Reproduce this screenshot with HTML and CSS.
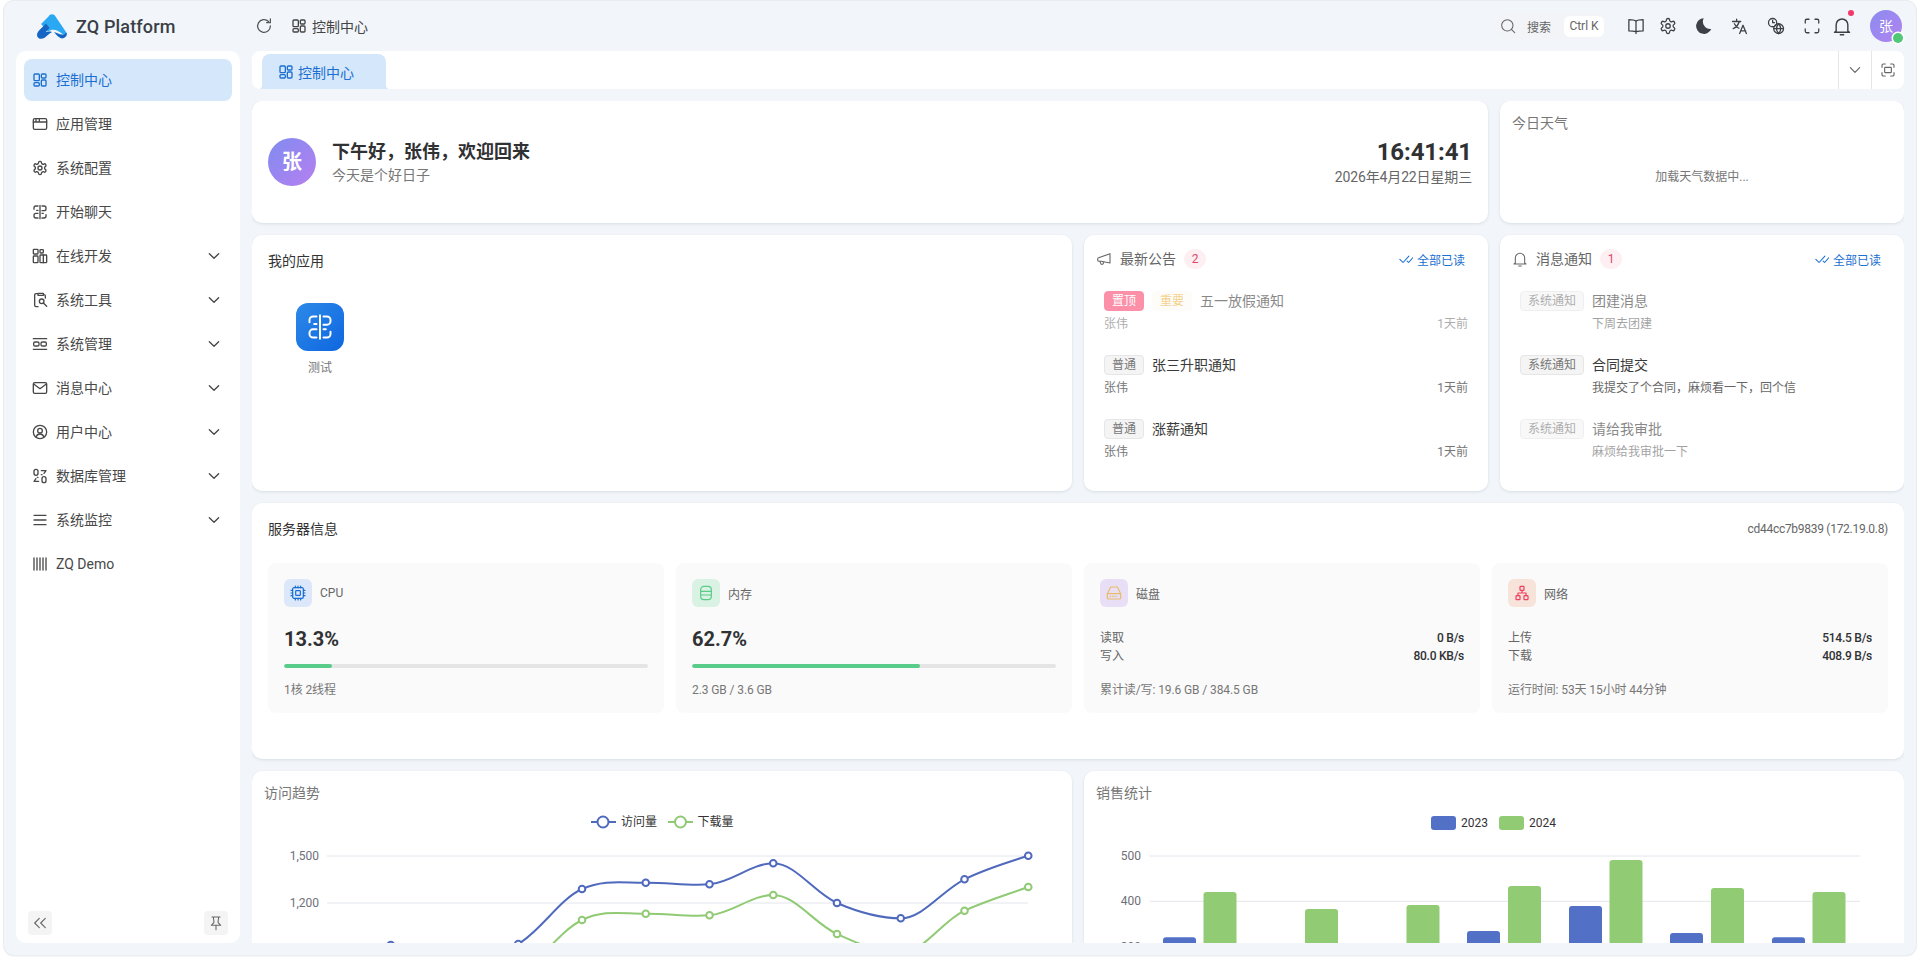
FILE: index.html
```html
<!DOCTYPE html>
<html lang="zh-CN">
<head>
<meta charset="utf-8">
<title>ZQ Platform</title>
<link rel="stylesheet" href="styles.css">
</head>
<body>
<svg class="defs" width="0" height="0" aria-hidden="true">
  <symbol id="i-grid" viewBox="0 0 24 24"><rect x="3" y="3" width="8" height="10" rx="1.500"/><rect x="14" y="3" width="7" height="6" rx="1.500"/><rect x="3" y="16" width="8" height="5" rx="1.500"/><rect x="14" y="12" width="7" height="9" rx="1.500"/></symbol>
  <symbol id="i-window" viewBox="0 0 24 24"><rect x="2" y="4" width="20" height="16" rx="2"/><path d="M2 9h20M6 4v5M11 4v5"/></symbol>
  <symbol id="i-gear" viewBox="0 0 24 24"><path d="M12.22 2h-.44a2 2 0 0 0-2 2v.18a2 2 0 0 1-1 1.73l-.43.25a2 2 0 0 1-2 0l-.15-.08a2 2 0 0 0-2.73.73l-.22.38a2 2 0 0 0 .73 2.73l.15.1a2 2 0 0 1 1 1.72v.51a2 2 0 0 1-1 1.74l-.15.09a2 2 0 0 0-.73 2.73l.22.38a2 2 0 0 0 2.73.73l.15-.08a2 2 0 0 1 2 0l.43.25a2 2 0 0 1 1 1.73V20a2 2 0 0 0 2 2h.44a2 2 0 0 0 2-2v-.18a2 2 0 0 1 1-1.73l.43-.25a2 2 0 0 1 2 0l.15.08a2 2 0 0 0 2.73-.73l.22-.39a2 2 0 0 0-.73-2.73l-.15-.08a2 2 0 0 1-1-1.74v-.5a2 2 0 0 1 1-1.74l.15-.09a2 2 0 0 0 .73-2.73l-.22-.38a2 2 0 0 0-2.73-.73l-.15.08a2 2 0 0 1-2 0l-.43-.25a2 2 0 0 1-1-1.73V4a2 2 0 0 0-2-2z"/><circle cx="12" cy="12" r="3"/></symbol>
  <symbol id="i-chat" viewBox="0 0 24 24"><path d="M12 2v20M9 3H6A3 3 0 0 0 3 6v2M7 9.500h2M9 14H6a3 3 0 0 0-3 3v1a3 3 0 0 0 3 3h3M15 3h3a3 3 0 0 1 3 3v1a3 3 0 0 1-3 3h-3M15 14h2M21 16v2a3 3 0 0 1-3 3h-3"/></symbol>
  <symbol id="i-dev" viewBox="0 0 24 24"><rect x="2" y="2" width="7" height="7" rx="1"/><rect x="12" y="2.500" width="5" height="5" rx="1"/><rect x="2" y="12" width="7" height="10" rx="1"/><rect x="12" y="10.500" width="10" height="11.500" rx="1"/><path d="M17 10.500V22"/></symbol>
  <symbol id="i-tool" viewBox="0 0 24 24"><path d="M9 2.500H6a2 2 0 0 0-2 2V20a2 2 0 0 0 2 2h3M9 2h8v3H9zM17 4h1a2 2 0 0 1 2 2v3"/><circle cx="14.500" cy="14" r="3.500"/><path d="m17 16.500 5 5"/></symbol>
  <symbol id="i-sys" viewBox="0 0 24 24"><path d="M2 4h20M2 20h20"/><rect x="2.500" y="9" width="8" height="6" rx="2"/><rect x="13.500" y="9" width="8" height="6" rx="2"/></symbol>
  <symbol id="i-mail" viewBox="0 0 24 24"><rect x="2" y="4" width="20" height="16" rx="2"/><path d="m2.500 6 9.500 7 9.500-7"/></symbol>
  <symbol id="i-user" viewBox="0 0 24 24"><circle cx="12" cy="12" r="10"/><circle cx="12" cy="10" r="3.500"/><path d="M6 19.500c1.200-3 3.700-4.500 6-4.500s4.800 1.500 6 4.500"/></symbol>
  <symbol id="i-db" viewBox="0 0 24 24"><rect x="3" y="2" width="6" height="9" rx="3"/><rect x="15" y="13" width="6" height="9" rx="3"/><path d="M14 4h7l-3 4M10 20H3l3-4M14 10h1M9 14H8"/></symbol>
  <symbol id="i-menu" viewBox="0 0 24 24"><path d="M3 5h18M3 12h18M3 19h18"/></symbol>
  <symbol id="i-bars" viewBox="0 0 24 24"><path d="M3 3v18M7.500 3v18M12 3v18M16.500 3v18M21 3v18"/></symbol>
  <symbol id="i-down" viewBox="0 0 24 24"><path d="m5 8.500 7 7 7-7"/></symbol>
  <symbol id="i-refresh" viewBox="0 0 24 24"><path d="M20.500 12a8.500 8.500 0 1 1-2.500-6"/><path d="M20.500 2.500V7.500h-5"/></symbol>
  <symbol id="i-search" viewBox="0 0 24 24"><circle cx="11" cy="11" r="8.500"/><path d="m17.500 17.500 4.500 4.500"/></symbol>
  <symbol id="i-book" viewBox="0 0 24 24"><path d="M12 5.500C10 4 7 3.500 2.500 3.500v15C7 18.500 10 19 12 19.500c2-.5 5-1 9.500-1v-15C17 3.500 14 4 12 5.500zM12 5.500V22"/></symbol>
  <symbol id="i-lang" viewBox="0 0 24 24"><path d="M2 6h11M7.500 3v3M11 6c-1 4-4.500 8-8 9.500M4.500 9c1.300 2.700 3.500 4.700 6 6M11.500 22l4.500-11 4.500 11M13 18.500h6.500"/></symbol>
  <symbol id="i-time" viewBox="0 0 24 24"><circle cx="7.500" cy="7.500" r="5.500"/><path d="M7.500 4.500v3h2.500"/><circle cx="15.500" cy="15.500" r="6.500"/><path d="M9 15.500h13M15.500 9c-3.500 4-3.500 9 0 13M15.500 9c3.500 4 3.500 9 0 13"/></symbol>
  <symbol id="i-full" viewBox="0 0 24 24"><path d="M3 8V5a2 2 0 0 1 2-2h3M16 3h3a2 2 0 0 1 2 2v3M21 16v3a2 2 0 0 1-2 2h-3M8 21H5a2 2 0 0 1-2-2v-3"/></symbol>
  <symbol id="i-bell" viewBox="0 0 24 24"><path d="M5 18V10.500a7 7 0 0 1 14 0V18l2 1.500H3zM10 22.500h4"/></symbol>
  <symbol id="i-horn" viewBox="0 0 24 24"><path d="M21 4v14L8 15.500H4.500a2 2 0 0 1-2-2v-1.500a2 2 0 0 1 1.500-2zM6 15.500l1 3a2 2 0 0 0 4 -1l-.300-1"/></symbol>
  <symbol id="i-check" viewBox="0 0 24 24"><path d="m1.500 12.500 5.500 5.500 10-11M14 15.500l2.500 2.500 7-8"/></symbol>
  <symbol id="i-cpu" viewBox="0 0 24 24"><rect x="4" y="4" width="16" height="16" rx="2"/><rect x="8.500" y="8.500" width="7" height="7" rx="1"/><path d="M8 1.500V4M12 1.500V4M16 1.500V4M8 20v2.500M12 20v2.500M16 20v2.500M1.500 8H4M1.500 12H4M1.500 16H4M20 8h2.500M20 12h2.500M20 16h2.500"/></symbol>
  <symbol id="i-mem" viewBox="0 0 24 24"><rect x="4" y="2" width="16" height="20" rx="5"/><path d="M4 9.500h16M4 15h16"/></symbol>
  <symbol id="i-disk" viewBox="0 0 24 24"><path d="M7 3h10l5 10v6a2 2 0 0 1-2 2H4a2 2 0 0 1-2-2v-6zM2 13h20M6 17h1M10 17h1M14 17h1"/></symbol>
  <symbol id="i-net" viewBox="0 0 24 24"><rect x="9" y="2" width="6" height="6" rx="1"/><rect x="3" y="16" width="6" height="6" rx="1"/><rect x="15" y="16" width="6" height="6" rx="1"/><path d="M12 8v4M6 16v-4h12v4"/></symbol>
  <symbol id="i-pin" viewBox="0 0 24 24"><path d="M8 3h8l-1 8 4 4.500H5L9 11zM12 15.500V22M6 3h12"/></symbol>
  <symbol id="i-left2" viewBox="0 0 24 24"><path d="m11 5-7 7 7 7M20 5l-7 7 7 7"/></symbol>
  <symbol id="i-scan" viewBox="0 0 24 24"><path d="M3 8V5a2 2 0 0 1 2-2h3M16 3h3a2 2 0 0 1 2 2v3M21 16v3a2 2 0 0 1-2 2h-3M8 21H5a2 2 0 0 1-2-2v-3"/><rect x="7" y="8" width="10" height="8" rx="1"/></symbol>
</svg>

<div class="frame">
  <header class="topbar">
    <div class="brand">
      <svg class="logo" viewBox="0 0 30 25" aria-hidden="true">
        <path fill="#2aa8f2" d="M11.500 2.500C13 -.5 17 -.5 18.500 2.500L29 18c1 2 .5 3-1 3-2 0-4-2.500-7-4-3.500-1.800-7-1.500-10 .5L4 10z"/>
        <path fill="#1566c4" d="M9 9.500 3 15.500C.5 18 -.8 20.500.6 23c1.300 2.200 4.500 2.400 7 .8 2.500-1.700 4.500-4.600 7.500-5.800-2.700-.8-5-.6-6.500.2L12.500 14z"/>
        <path fill="#1566c4" d="M17 18c3 .6 5.500 2.600 8 2.600 2.100 0 3.800-.8 4.600-2.100.8 2.400-.2 5-3.400 5.800-3.500.8-6.700-3.200-9.200-6.300z"/>
      </svg>
      <span class="brand-name">ZQ Platform</span>
    </div>
    <div class="crumbs">
      <svg class="ico refresh"><use href="#i-refresh"/></svg>
      <svg class="ico"><use href="#i-grid"/></svg>
      <span>控制中心</span>
    </div>
    <div class="tools">
      <div class="search">
        <svg class="ico"><use href="#i-search"/></svg>
        <span class="search-label">搜索</span>
        <kbd class="kbd">Ctrl K</kbd>
      </div>
      <svg class="ico tool-book"><use href="#i-book"/></svg>
      <svg class="ico tool-gear"><use href="#i-gear"/></svg>
      <svg class="moon" viewBox="0 0 24 24" aria-hidden="true"><path d="M13 1.500A10.500 10.500 0 1 0 23 16 10 10 0 0 1 13 1.500z"/></svg>
      <svg class="ico tool-lang"><use href="#i-lang"/></svg>
      <svg class="ico tool-time"><use href="#i-time"/></svg>
      <svg class="ico tool-full"><use href="#i-full"/></svg>
      <div class="bell">
        <svg class="ico"><use href="#i-bell"/></svg>
        <i class="bell-dot"></i>
      </div>
      <div class="me">张<i class="me-dot"></i></div>
    </div>
  </header>

  <div class="body">
    <aside class="sidebar">
      <nav class="menu">
        <a class="menu-item active"><svg class="ico"><use href="#i-grid"/></svg><span>控制中心</span></a>
        <a class="menu-item"><svg class="ico"><use href="#i-window"/></svg><span>应用管理</span></a>
        <a class="menu-item"><svg class="ico"><use href="#i-gear"/></svg><span>系统配置</span></a>
        <a class="menu-item"><svg class="ico"><use href="#i-chat"/></svg><span>开始聊天</span></a>
        <a class="menu-item"><svg class="ico"><use href="#i-dev"/></svg><span>在线开发</span><svg class="ico arrow"><use href="#i-down"/></svg></a>
        <a class="menu-item"><svg class="ico"><use href="#i-tool"/></svg><span>系统工具</span><svg class="ico arrow"><use href="#i-down"/></svg></a>
        <a class="menu-item"><svg class="ico"><use href="#i-sys"/></svg><span>系统管理</span><svg class="ico arrow"><use href="#i-down"/></svg></a>
        <a class="menu-item"><svg class="ico"><use href="#i-mail"/></svg><span>消息中心</span><svg class="ico arrow"><use href="#i-down"/></svg></a>
        <a class="menu-item"><svg class="ico"><use href="#i-user"/></svg><span>用户中心</span><svg class="ico arrow"><use href="#i-down"/></svg></a>
        <a class="menu-item"><svg class="ico"><use href="#i-db"/></svg><span>数据库管理</span><svg class="ico arrow"><use href="#i-down"/></svg></a>
        <a class="menu-item"><svg class="ico"><use href="#i-menu"/></svg><span>系统监控</span><svg class="ico arrow"><use href="#i-down"/></svg></a>
        <a class="menu-item latin"><svg class="ico"><use href="#i-bars"/></svg><span>ZQ Demo</span></a>
      </nav>
      <div class="side-foot">
        <button class="side-btn"><svg class="ico"><use href="#i-left2"/></svg></button>
        <button class="side-btn"><svg class="ico"><use href="#i-pin"/></svg></button>
      </div>
    </aside>

    <main class="main">
      <div class="tabbar">
        <div class="tab"><svg class="ico"><use href="#i-grid"/></svg><span>控制中心</span></div>
        <div class="tab-action"><svg class="ico"><use href="#i-down"/></svg></div>
        <div class="tab-action"><svg class="ico"><use href="#i-scan"/></svg></div>
      </div>

      <div class="content">
        <section class="card hero">
          <div class="hero-avatar">张</div>
          <div class="hero-text">
            <h1>下午好，张伟，欢迎回来</h1>
            <p>今天是个好日子</p>
          </div>
          <div class="clock">
            <strong>16:41:41</strong>
            <span>2026年4月22日星期三</span>
          </div>
        </section>

        <section class="card weather">
          <h2 class="weather-title">今日天气</h2>
          <p class="weather-load">加载天气数据中...</p>
        </section>

        <section class="card apps">
          <h2 class="card-title">我的应用</h2>
          <div class="app-tile">
            <div class="app-icon"><svg class="ico"><use href="#i-chat"/></svg></div>
            <span>测试</span>
          </div>
        </section>

        <section class="card feed">
          <div class="feed-head">
            <svg class="ico"><use href="#i-horn"/></svg>
            <span class="feed-title">最新公告</span>
            <span class="count">2</span>
            <a class="read-all"><svg class="ico"><use href="#i-check"/></svg>全部已读</a>
          </div>
          <ul class="feed-list">
            <li class="feed-item read">
              <div class="feed-line"><span class="tag tag-top">置顶</span><span class="tag tag-warn">重要</span><span class="feed-name">五一放假通知</span></div>
              <div class="feed-meta"><span>张伟</span><span>1天前</span></div>
            </li>
            <li class="feed-item">
              <div class="feed-line"><span class="tag">普通</span><span class="feed-name">张三升职通知</span></div>
              <div class="feed-meta"><span>张伟</span><span>1天前</span></div>
            </li>
            <li class="feed-item">
              <div class="feed-line"><span class="tag">普通</span><span class="feed-name">涨薪通知</span></div>
              <div class="feed-meta"><span>张伟</span><span>1天前</span></div>
            </li>
          </ul>
        </section>

        <section class="card feed">
          <div class="feed-head">
            <svg class="ico"><use href="#i-bell"/></svg>
            <span class="feed-title">消息通知</span>
            <span class="count">1</span>
            <a class="read-all"><svg class="ico"><use href="#i-check"/></svg>全部已读</a>
          </div>
          <ul class="feed-list">
            <li class="feed-item msg read">
              <span class="tag">系统通知</span>
              <div><div class="feed-name">团建消息</div><div class="feed-desc">下周去团建</div></div>
            </li>
            <li class="feed-item msg">
              <span class="tag">系统通知</span>
              <div><div class="feed-name">合同提交</div><div class="feed-desc">我提交了个合同，麻烦看一下，回个信</div></div>
            </li>
            <li class="feed-item msg read">
              <span class="tag">系统通知</span>
              <div><div class="feed-name">请给我审批</div><div class="feed-desc">麻烦给我审批一下</div></div>
            </li>
          </ul>
        </section>

        <section class="card server">
          <div class="server-head">
            <h2 class="card-title">服务器信息</h2>
            <span class="server-host">cd44cc7b9839 (172.19.0.8)</span>
          </div>
          <div class="stats">
            <div class="stat">
              <div class="stat-head"><span class="stat-icon c-blue"><svg class="ico"><use href="#i-cpu"/></svg></span>CPU</div>
              <div class="stat-value">13.3%</div>
              <div class="track"><div class="fill" style="width:13.3%"></div></div>
              <div class="stat-foot">1核 2线程</div>
            </div>
            <div class="stat">
              <div class="stat-head"><span class="stat-icon c-green"><svg class="ico"><use href="#i-mem"/></svg></span>内存</div>
              <div class="stat-value">62.7%</div>
              <div class="track"><div class="fill" style="width:62.7%"></div></div>
              <div class="stat-foot">2.3 GB / 3.6 GB</div>
            </div>
            <div class="stat">
              <div class="stat-head"><span class="stat-icon c-purple"><svg class="ico"><use href="#i-disk"/></svg></span>磁盘</div>
              <div class="stat-rows">
                <div class="stat-row"><span>读取</span><b>0 B/s</b></div>
                <div class="stat-row"><span>写入</span><b>80.0 KB/s</b></div>
              </div>
              <div class="stat-foot">累计读/写: 19.6 GB / 384.5 GB</div>
            </div>
            <div class="stat">
              <div class="stat-head"><span class="stat-icon c-red"><svg class="ico"><use href="#i-net"/></svg></span>网络</div>
              <div class="stat-rows">
                <div class="stat-row"><span>上传</span><b>514.5 B/s</b></div>
                <div class="stat-row"><span>下载</span><b>408.9 B/s</b></div>
              </div>
              <div class="stat-foot">运行时间: 53天 15小时 44分钟</div>
            </div>
          </div>
        </section>

        <section class="card chart">
          <h2 class="chart-title">访问趋势</h2>
          <svg class="chart-svg" viewBox="0 0 820 320" aria-label="访问趋势折线图">
            <g class="grid"><path d="M75 85h701.250M75 132h701.250M75 179h701.250"/></g>
            <g class="axis">
              <text x="67" y="89">1,500</text>
              <text x="67" y="136">1,200</text>
            </g>
            <g class="legend-text">
              <text x="369" y="55">访问量</text>
              <text x="445.500" y="55">下载量</text>
            </g>
            <path class="line s-blue" d="M339 51h25"/>
            <circle class="dot-lg s-blue" cx="351" cy="51" r="5.500"/>
            <path class="line s-green" d="M416 51h25"/>
            <circle class="dot-lg s-green" cx="428.500" cy="51" r="5.500"/>
            <path class="line s-green" d="M75 230C97.300 226 116.500 215 138.750 215C161 215 180.200 230 202.500 230C224.800 230 244 220 266.250 205C288.500 190 307.700 160 330 149C352.300 138 371.500 143 393.750 142.700C416 142.400 435.200 146 457.500 144.300C479.800 142.600 499 124 521.250 124C543.500 124 562.700 153 585 163C607.300 173 626.500 182 648.750 182C671 182 690.200 150 712.500 139.700C734.800 129.400 754 124 776.250 116"/>
            <path class="line s-blue" d="M75 190C97.300 186 116.500 174 138.750 174C161 174 180.200 190 202.500 190C224.800 190 244 185.600 266.250 173C288.500 160.400 307.700 128 330 118C352.300 108 371.500 112 393.750 111.700C416 111.400 435.200 115 457.500 113.300C479.800 111.600 499 92.300 521.250 92.300C543.500 92.300 562.700 122.400 585 132C607.300 141.600 626.500 147.300 648.750 147.300C671 147.300 690.200 119.300 712.500 108.300C734.800 97.300 754 92 776.250 84.700"/>
            <g class="dots s-green">
              <circle cx="330" cy="149"/><circle cx="393.750" cy="142.700"/><circle cx="457.500" cy="144.300"/><circle cx="521.250" cy="124"/><circle cx="585" cy="163"/><circle cx="712.500" cy="139.700"/><circle cx="776.250" cy="116"/>
            </g>
            <g class="dots s-blue">
              <circle cx="138.750" cy="174"/><circle cx="266.250" cy="173"/><circle cx="330" cy="118"/><circle cx="393.750" cy="111.700"/><circle cx="457.500" cy="113.300"/><circle cx="521.250" cy="92.300"/><circle cx="585" cy="132"/><circle cx="648.750" cy="147.300"/><circle cx="712.500" cy="108.300"/><circle cx="776.250" cy="84.700"/>
            </g>
          </svg>
        </section>

        <section class="card chart">
          <h2 class="chart-title">销售统计</h2>
          <svg class="chart-svg" viewBox="0 0 820 320" aria-label="销售统计柱状图">
            <g class="grid"><path d="M65.500 85H776M65.500 130.300H776M65.500 175.600H776"/></g>
            <g class="axis">
              <text x="57" y="89">500</text>
              <text x="57" y="134">400</text>
              <text x="57" y="180">300</text>
            </g>
            <rect class="bar-blue" x="347" y="45" width="25" height="14" rx="3"/>
            <text class="legend-plain" x="377" y="55.500">2023</text>
            <rect class="bar-green" x="415" y="45" width="25" height="14" rx="3"/>
            <text class="legend-plain" x="445" y="55.500">2024</text>
            <g class="bar-blue">
              <rect x="79" y="166.300" width="33" height="80" rx="3"/>
              <rect x="383" y="160" width="33" height="80" rx="3"/>
              <rect x="485" y="135" width="33" height="80" rx="3"/>
              <rect x="586" y="162" width="33" height="80" rx="3"/>
              <rect x="688" y="166.300" width="33" height="80" rx="3"/>
            </g>
            <g class="bar-green">
              <rect x="119.500" y="121" width="33" height="120" rx="3"/>
              <rect x="221" y="138" width="33" height="120" rx="3"/>
              <rect x="322.500" y="134" width="33" height="120" rx="3"/>
              <rect x="424" y="115" width="33" height="120" rx="3"/>
              <rect x="525.500" y="89" width="33" height="120" rx="3"/>
              <rect x="627" y="117" width="33" height="120" rx="3"/>
              <rect x="728.500" y="121" width="33" height="120" rx="3"/>
            </g>
          </svg>
        </section>
      </div>
    </main>
  </div>
</div>
</body>
</html>
```

FILE: styles.css
```css
* { box-sizing: border-box; }
html, body { height: 100%; margin: 0; }
body {
  padding: 1px 3px 3px 4px;
  background: #fff;
  color: #333;
  font-family: Roboto, "Noto Sans CJK SC", sans-serif;
  font-size: 14px;
  overflow: hidden;
}
h1, h2, p, ul { margin: 0; padding: 0; font-weight: 400; }
ul { list-style: none; }
.defs { position: absolute; }

.ico {
  width: 16px;
  height: 16px;
  flex: none;
  fill: none;
  stroke: currentColor;
  stroke-width: 2;
  stroke-linecap: round;
  stroke-linejoin: round;
}

.frame {
  height: 100%;
  display: flex;
  flex-direction: column;
  background: #f2f6fa;
  border-radius: 10px;
  box-shadow: 0 0 0 1px #e9edf1, 0 1px 2px rgba(0, 0, 0, .12);
  overflow: hidden;
}

/* top bar */
.topbar { height: 50px; flex: none; display: flex; align-items: center; }
.brand { width: 248px; padding-left: 33px; display: flex; align-items: center; gap: 9px; }
.logo { width: 30px; height: 25px; flex: none; }
.brand-name { font-size: 18px; letter-spacing: .15px; font-weight: 500; color: #3a3f47; }
.crumbs { display: flex; align-items: center; color: #444; }
.crumbs .refresh { width: 18px; height: 18px; margin-left: 3px; margin-right: 18px; color: #555; stroke-width: 1.700; }
.crumbs span { margin-left: 5px; padding-bottom: 1px; }
.tools { margin-left: auto; display: flex; align-items: center; color: #3d4147; }
.search {
  display: flex;
  align-items: center;
  height: 26px;
  padding: 0 2px 0 6px;
  margin-right: 21px;
  border-radius: 13px;
  background: #f2f4f7;
  color: #666;
}
.search .ico { stroke-width: 1.600; }
.search-label { margin-left: 11px; font-size: 12px; }
.kbd {
  margin-left: 13px;
  width: 40px;
  height: 21px;
  text-align: center;
  background: #fff;
  border-radius: 6px;
  font: 12px/21px Roboto, sans-serif;
  color: #666;
}
.tools > .ico, .bell .ico { width: 18px; height: 18px; stroke-width: 1.700; }
.tool-book { margin-right: 14px; }
.tool-gear { margin-right: 17px; }
.moon { width: 18px; height: 18px; fill: #3d4147; margin-right: 19px; }
.tool-lang { margin-right: 18px; }
.tool-time { margin-right: 18px; }
.tool-full { margin-right: 11px; }
.bell { position: relative; display: flex; margin-right: 18px; }
.bell .ico { width: 20px; height: 20px; }
.bell-dot {
  position: absolute;
  top: -6px;
  right: -2px;
  width: 6px;
  height: 6px;
  border-radius: 50%;
  background: #f5386a;
}
.me {
  position: relative;
  width: 32px;
  height: 32px;
  margin-right: 14px;
  border-radius: 50%;
  background: linear-gradient(135deg, #8b8bf0, #b184f0);
  color: #fff;
  text-align: center;
  font-size: 14px;
  line-height: 32px;
}
.me-dot {
  position: absolute;
  right: -1px;
  bottom: -1px;
  width: 10px;
  height: 10px;
  border-radius: 50%;
  background: #50c878;
  box-shadow: 0 0 0 1.500px #fff;
}

/* layout */
.body { flex: 1; min-height: 0; display: flex; gap: 12px; padding: 0 12px 12px; }
.sidebar {
  width: 224px;
  flex: none;
  display: flex;
  flex-direction: column;
  background: #fff;
  border-radius: 10px;
  padding: 8px;
}
.menu { flex: 1; display: flex; flex-direction: column; gap: 2px; }
.menu-item {
  height: 42px;
  display: flex;
  align-items: center;
  gap: 8px;
  padding: 0 10px 0 8px;
  border-radius: 8px;
  color: #484848;
}
.menu-item span { padding-bottom: 2px; }
.menu-item.latin span { padding-bottom: 0; }
.menu-item .arrow { margin-left: auto; }
.menu-item.active { background: #d5e7fb; color: #1a6fd0; }
.side-foot { display: flex; justify-content: space-between; padding: 0 4px; }
.side-btn {
  width: 24px;
  height: 24px;
  padding: 0;
  border: 0;
  border-radius: 4px;
  background: #f4f4f4;
  color: #666;
  display: flex;
  align-items: center;
  justify-content: center;
}
.side-btn .ico { stroke-width: 1.600; }

.main { flex: 1; min-width: 0; display: flex; flex-direction: column; gap: 12px; }
.tabbar {
  height: 38px;
  flex: none;
  display: flex;
  align-items: flex-end;
  background: #fff;
  border-radius: 8px;
  padding-left: 10px;
}
.tab {
  position: relative;
  width: 124px;
  height: 35px;
  margin-right: auto;
  display: flex;
  align-items: center;
  gap: 4px;
  padding: 0 0 0 16px;
  background: #d5e7fb;
  border-radius: 8px 8px 0 0;
  color: #1a6fd0;
}
.tab::before, .tab::after {
  content: "";
  position: absolute;
  bottom: 0;
  width: 4px;
  height: 4px;
}
.tab::before { left: -4px; background: radial-gradient(circle at 0 0, transparent 4px, #d5e7fb 4.500px); }
.tab::after { right: -4px; background: radial-gradient(circle at 100% 0, transparent 4px, #d5e7fb 4.500px); }
.tab-action {
  width: 33px;
  height: 38px;
  display: flex;
  align-items: center;
  justify-content: center;
  border-left: 1px solid #e6e6e6;
  color: #666;
}
.tab-action .ico { stroke-width: 1.700; }

.content {
  flex: 1;
  min-height: 0;
  overflow: hidden;
  display: grid;
  grid-template-columns: repeat(4, 1fr);
  grid-auto-rows: min-content;
  gap: 12px;
}
.card {
  background: #fff;
  border-radius: 10px;
  box-shadow: 0 1px 3px rgba(30, 50, 80, .12);
}
.card-title { font-size: 14px; line-height: 20px; color: #333; }

/* hero */
.hero {
  grid-column: span 3;
  height: 122px;
  display: flex;
  align-items: center;
  padding: 0 16px;
}
.hero-avatar {
  width: 48px;
  height: 48px;
  border-radius: 50%;
  background: linear-gradient(135deg, #7f8cf0, #b67ff0);
  color: #fff;
  font-size: 20px;
  font-weight: 700;
  line-height: 48px;
  text-align: center;
  margin-right: 16px;
}
.hero-text h1 { font-size: 18px; font-weight: 700; line-height: 26px; color: #303133; }
.hero-text p { font-size: 14px; line-height: 20px; color: #777; }
.clock { margin-left: auto; text-align: right; display: flex; flex-direction: column; }
.clock strong { font-size: 24px; line-height: 30px; color: #303133; letter-spacing: -.1px; }
.clock span { font-size: 14px; line-height: 20px; color: #666; letter-spacing: -.15px; }

.weather { height: 122px; padding: 12px; }
.weather-title { font-size: 14px; line-height: 20px; color: #777; }
.weather-load { margin-top: 35px; text-align: center; font-size: 12px; line-height: 18px; color: #777; }

/* apps */
.apps { grid-column: span 2; height: 256px; padding: 16px; }
.app-tile {
  width: 96px;
  margin: 32px 0 0 4px;
  display: flex;
  flex-direction: column;
  align-items: center;
  gap: 8px;
  font-size: 12px;
  line-height: 18px;
  color: #777;
}
.app-icon {
  width: 48px;
  height: 48px;
  border-radius: 12px;
  background: linear-gradient(135deg, #2c8ae8, #0f66e0);
  color: #fff;
  display: flex;
  align-items: center;
  justify-content: center;
}
.app-icon .ico { width: 28px; height: 28px; stroke-width: 1.700; }

/* feeds */
.feed { height: 256px; padding: 12px 0 0; }
.feed-head {
  height: 24px;
  display: flex;
  align-items: center;
  padding: 0 23px 0 12px;
  margin-bottom: 20px;
  color: #666;
}
.feed-head > .ico { stroke-width: 1.600; }
.feed-title { margin-left: 8px; line-height: 20px; }
.count {
  margin-left: 8px;
  width: 22px;
  height: 20px;
  border-radius: 10px;
  background: #fdeff2;
  color: #e0476d;
  font-size: 12px;
  line-height: 20px;
  text-align: center;
}
.read-all {
  margin-left: auto;
  display: flex;
  align-items: center;
  gap: 4px;
  font-size: 12px;
  color: #1a6fd0;
}
.read-all .ico { width: 14px; height: 14px; stroke-width: 1.800; }
.feed-list { display: flex; flex-direction: column; gap: 22px; padding: 0 20px; }
.feed-item.read { opacity: .6; }
.feed-line { display: flex; align-items: center; gap: 8px; height: 20px; }
.feed-name { line-height: 20px; color: #3a3a3a; }
.tag {
  flex: none;
  height: 20px;
  padding: 0 7px;
  border: 1px solid #e6e6e6;
  border-radius: 4px;
  background: #f4f4f4;
  color: #777;
  font-size: 12px;
  line-height: 18px;
  white-space: nowrap;
}
.tag-top { border-color: #f9476f; background: #f9476f; color: #fff; }
.tag-warn { border-color: #fefbf4; background: #fefbf4; color: #eab642; }
.feed-meta {
  margin-top: 4px;
  display: flex;
  justify-content: space-between;
  font-size: 12px;
  line-height: 18px;
  color: #777;
}
.feed-item.msg { display: flex; gap: 8px; height: 42px; }
.feed-desc { margin-top: 4px; font-size: 12px; line-height: 18px; color: #666; }

/* server */
.server { grid-column: 1 / -1; height: 256px; padding: 16px; }
.server-head { display: flex; justify-content: space-between; align-items: center; }
.server-host { font-size: 12px; color: #666; letter-spacing: -.28px; }
.stats { display: grid; grid-template-columns: repeat(4, 1fr); gap: 12px; margin-top: 24px; }
.stat { height: 150px; padding: 16px; border-radius: 8px; background: #fafafa; }
.stat-head { display: flex; align-items: center; gap: 8px; font-size: 12px; color: #666; }
.stat-icon {
  width: 28px;
  height: 28px;
  border-radius: 6px;
  display: flex;
  align-items: center;
  justify-content: center;
}
.stat-icon .ico { stroke-width: 1.800; }
.c-blue { background: #dce8fa; color: #1a6fd0; }
.c-green { background: #d9f2e3; color: #5acb88; }
.c-purple { background: #e8dff7; color: #e8bd68; }
.c-red { background: #f8e3da; color: #ee3f60; }
.stat-value { margin-top: 18px; font-size: 20px; font-weight: 700; line-height: 28px; color: #303133; }
.track { margin-top: 11px; height: 4px; border-radius: 2px; background: #e5e5e5; overflow: hidden; }
.fill { height: 100%; border-radius: 2px; background: #58cc88; }
.stat-foot { margin-top: 13px; font-size: 12px; line-height: 18px; color: #777; letter-spacing: -.1px; }
.stat-rows { margin-top: 22px; margin-bottom: 16px; }
.stat-rows + .stat-foot { margin-top: 0; }
.stat-row { display: flex; justify-content: space-between; font-size: 12px; line-height: 18px; color: #666; }
.stat-row b { font-weight: 500; color: #303133; letter-spacing: -.25px; }

/* charts */
.chart { grid-column: span 2; height: 320px; padding-top: 12px; }
.chart-title { padding: 0 12px; font-size: 14px; line-height: 20px; color: #777; position: relative; }
.chart-svg { display: block; width: 820px; height: 320px; margin-top: -32px; font-size: 12px; }
.grid path { stroke: #e3e6ec; stroke-width: 1; fill: none; }
.axis text { text-anchor: end; fill: #6e7079; }
.legend-text text, .legend-plain { fill: #333; }
.line { fill: none; stroke-width: 2; }
.s-blue { stroke: #4f69bd; }
.s-green { stroke: #90ca74; }
.dot-lg { fill: #fff; stroke-width: 2; }
.dots circle { r: 3.300px; fill: #fff; stroke-width: 2; }
.bar-blue { fill: #5170c6; }
.bar-green { fill: #91cc75; }
```
